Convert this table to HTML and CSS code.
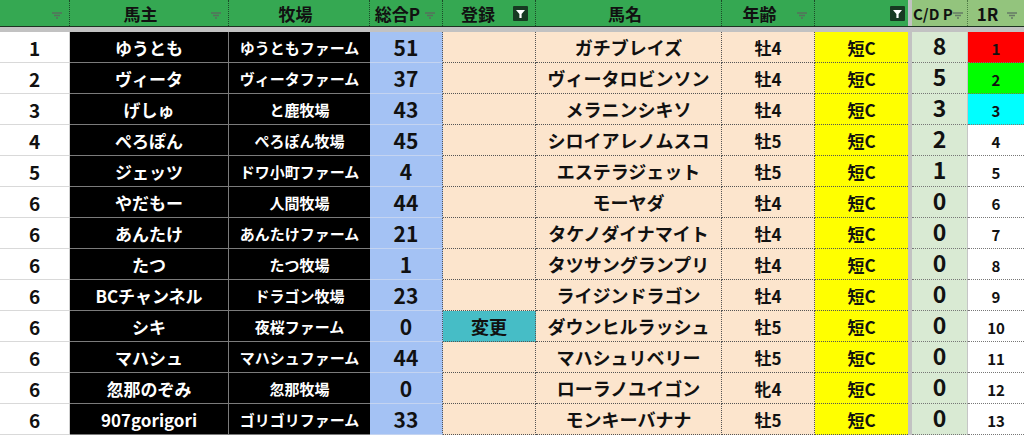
FILE: index.html
```html
<!DOCTYPE html>
<html lang="ja">
<head>
<meta charset="utf-8">
<title>馬主一覧</title>
<link rel="stylesheet" href="styles.css">
</head>
<body>
<div class="sheet">
  <div class="grid hdr">
    <div class="h"><span class="ht"></span><svg class="fi" viewBox="0 0 10 7"><path d="M0 1H10M2 3.5H8M4 6H6"/></svg></div>
    <div class="h"><span class="ht">馬主</span><svg class="fi" viewBox="0 0 10 7"><path d="M0 1H10M2 3.5H8M4 6H6"/></svg></div>
    <div class="h"><span class="ht">牧場</span></div>
    <div class="h"><span class="ht">総合P</span><svg class="fi" viewBox="0 0 10 7"><path d="M0 1H10M2 3.5H8M4 6H6"/></svg></div>
    <div class="h"><span class="ht">登録</span><svg class="fa" viewBox="0 0 15 15"><rect width="15" height="15" rx="1"/><path d="M3 4H12L8.6 8V12H6.4V8Z"/></svg></div>
    <div class="h"><span class="ht">馬名</span></div>
    <div class="h"><span class="ht">年齢</span><svg class="fi" viewBox="0 0 10 7"><path d="M0 1H10M2 3.5H8M4 6H6"/></svg></div>
    <div class="h"><span class="ht"></span><svg class="fa" viewBox="0 0 15 15"><rect width="15" height="15" rx="1"/><path d="M3 4H12L8.6 8V12H6.4V8Z"/></svg></div>
    <div class="fz"></div>
    <div class="h lt tight"><span class="ht">C/D P</span><svg class="fi" viewBox="0 0 10 7"><path d="M0 1H10M2 3.5H8M4 6H6"/></svg></div>
    <div class="h lt"><span class="ht">1R</span><svg class="fi" viewBox="0 0 10 7"><path d="M0 1H10M2 3.5H8M4 6H6"/></svg></div>
  </div>
  <div class="band"></div>

  <div class="grid row"><div class="c rank">1</div><div class="c own">ゆうとも</div><div class="c farm">ゆうともファーム</div><div class="c pt">51</div><div class="c reg"></div><div class="c horse">ガチブレイズ</div><div class="c age">牡4</div><div class="c cls">短C</div><div class="fz"></div><div class="c cd">8</div><div class="c r red">1</div></div>
  <div class="grid row"><div class="c rank">2</div><div class="c own">ヴィータ</div><div class="c farm">ヴィータファーム</div><div class="c pt">37</div><div class="c reg"></div><div class="c horse">ヴィータロビンソン</div><div class="c age">牡4</div><div class="c cls">短C</div><div class="fz"></div><div class="c cd">5</div><div class="c r grn">2</div></div>
  <div class="grid row"><div class="c rank">3</div><div class="c own">げしゅ</div><div class="c farm">と鹿牧場</div><div class="c pt">43</div><div class="c reg"></div><div class="c horse">メラニンシキソ</div><div class="c age">牡4</div><div class="c cls">短C</div><div class="fz"></div><div class="c cd">3</div><div class="c r cyn">3</div></div>
  <div class="grid row"><div class="c rank">4</div><div class="c own">ぺろぽん</div><div class="c farm">ぺろぽん牧場</div><div class="c pt">45</div><div class="c reg"></div><div class="c horse">シロイアレノムスコ</div><div class="c age">牡5</div><div class="c cls">短C</div><div class="fz"></div><div class="c cd">2</div><div class="c r">4</div></div>
  <div class="grid row"><div class="c rank">5</div><div class="c own">ジェッツ</div><div class="c farm">ドワ小町ファーム</div><div class="c pt">4</div><div class="c reg"></div><div class="c horse">エステラジェット</div><div class="c age">牡5</div><div class="c cls">短C</div><div class="fz"></div><div class="c cd">1</div><div class="c r">5</div></div>
  <div class="grid row"><div class="c rank">6</div><div class="c own">やだもー</div><div class="c farm">人間牧場</div><div class="c pt">44</div><div class="c reg"></div><div class="c horse">モーヤダ</div><div class="c age">牡4</div><div class="c cls">短C</div><div class="fz"></div><div class="c cd">0</div><div class="c r">6</div></div>
  <div class="grid row"><div class="c rank">6</div><div class="c own">あんたけ</div><div class="c farm">あんたけファーム</div><div class="c pt">21</div><div class="c reg"></div><div class="c horse">タケノダイナマイト</div><div class="c age">牡4</div><div class="c cls">短C</div><div class="fz"></div><div class="c cd">0</div><div class="c r">7</div></div>
  <div class="grid row"><div class="c rank">6</div><div class="c own">たつ</div><div class="c farm">たつ牧場</div><div class="c pt">1</div><div class="c reg"></div><div class="c horse">タツサングランプリ</div><div class="c age">牡4</div><div class="c cls">短C</div><div class="fz"></div><div class="c cd">0</div><div class="c r">8</div></div>
  <div class="grid row"><div class="c rank">6</div><div class="c own">BCチャンネル</div><div class="c farm">ドラゴン牧場</div><div class="c pt">23</div><div class="c reg"></div><div class="c horse">ライジンドラゴン</div><div class="c age">牡4</div><div class="c cls">短C</div><div class="fz"></div><div class="c cd">0</div><div class="c r">9</div></div>
  <div class="grid row"><div class="c rank">6</div><div class="c own">シキ</div><div class="c farm">夜桜ファーム</div><div class="c pt">0</div><div class="c reg chg">変更</div><div class="c horse">ダウンヒルラッシュ</div><div class="c age">牡5</div><div class="c cls">短C</div><div class="fz"></div><div class="c cd">0</div><div class="c r">10</div></div>
  <div class="grid row"><div class="c rank">6</div><div class="c own">マハシュ</div><div class="c farm">マハシュファーム</div><div class="c pt">44</div><div class="c reg"></div><div class="c horse">マハシュリベリー</div><div class="c age">牡5</div><div class="c cls">短C</div><div class="fz"></div><div class="c cd">0</div><div class="c r">11</div></div>
  <div class="grid row"><div class="c rank">6</div><div class="c own">忽那のぞみ</div><div class="c farm">忽那牧場</div><div class="c pt">0</div><div class="c reg"></div><div class="c horse">ローラノユイゴン</div><div class="c age">牝4</div><div class="c cls">短C</div><div class="fz"></div><div class="c cd">0</div><div class="c r">12</div></div>
  <div class="grid row"><div class="c rank">6</div><div class="c own">907gorigori</div><div class="c farm">ゴリゴリファーム</div><div class="c pt">33</div><div class="c reg"></div><div class="c horse">モンキーバナナ</div><div class="c age">牡5</div><div class="c cls">短C</div><div class="fz"></div><div class="c cd">0</div><div class="c r">13</div></div>
</div>
</body>
</html>
```
FILE: styles.css
```css
* { box-sizing: border-box; }
html, body { margin: 0; padding: 0; background: #fff; }
body {
  font-family: "Noto Sans CJK JP", "Noto Sans", sans-serif;
  font-weight: 700;
  color: #111;
  width: 1024px;
  height: 435px;
  overflow: hidden;
}
.sheet { width: 1024px; }
.grid {
  display: grid;
  grid-template-columns: 70px 159px 141px 73px 93px 186px 93px 93px 4px 56px 56px;
}
.hdr { height: 27px; border-bottom: 1px solid #1d3322; }
.band { height: 5px; background: #c2c2c2; }
.fz { background: #c2c2c2; }

.h {
  background: #35a852;
  display: flex;
  align-items: center;
  padding-right: 7px;
  border-right: 1px dotted #1b4a29;
  font-size: 17px;
  line-height: 1;
}
.h:nth-child(8) { border-right: none; padding-right: 3px; }
.h.lt { background: #93c47d; border-right: 1px dotted #4f7a45; }
.h.lt:last-child { border-right: none; }
.ht { flex: 1; text-align: center; white-space: nowrap; }
.tight { padding-right: 5px; }
.tight .ht { text-align: left; padding-left: 1px; font-size: 15px; }
.fi { width: 10px; height: 7px; margin-top: 5px; flex: none; }
.fi path { stroke: #56705c; stroke-width: 1.4; fill: none; }
.lt .fi path { stroke: #667a66; }
.fa { width: 15px; height: 15px; flex: none; }
.fa rect { fill: #173a22; }
.fa path { fill: #fff; }

.row { height: 31px; }
.c {
  display: flex;
  align-items: center;
  justify-content: center;
  white-space: nowrap;
  line-height: 1;
  font-size: 18px;
}
.rank { background: #fff; border-bottom: 1px solid #d9d9d9; border-right: 1px solid #cfcfcf; font-size: 19px; }
.own { background: #000; color: #fff; font-size: 17px; border-right: 1px solid #7b7b7b; border-bottom: 1px solid #7b7b7b; }
.farm { background: #000; color: #fff; font-size: 15px; border-bottom: 1px solid #7b7b7b; }
.pt { background: #a4c2f4; font-size: 21px; border-bottom: 1px solid #c4d4f1; border-right: 1px dotted #555; }
.reg, .horse, .age { background: #fce5cd; border-right: 1px dotted #555; border-bottom: 1px dotted #555; }
.horse { font-size: 18px; }
.age { font-size: 17px; }
.chg { background: #46bdc6; font-size: 18px; }
.cls { background: #ffff00; font-size: 17px; border-bottom: 1px dotted #555; }
.cd { background: #d9ead3; font-size: 23px; border-bottom: 1px dotted #777; border-right: 1px solid #c6c6c6; padding-bottom: 3px; }
.r { background: #fff; font-size: 15px; border-bottom: 1px dotted #777; padding-top: 3px; }
.r.red { background: #ff0000; }
.r.grn { background: #00ff00; }
.r.cyn { background: #00ffff; }
```
